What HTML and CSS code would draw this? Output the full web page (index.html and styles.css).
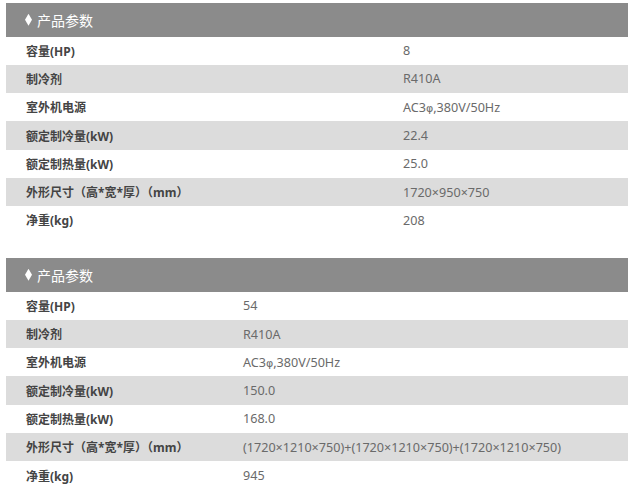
FILE: index.html
```html
<!DOCTYPE html>
<html lang="zh-CN">
<head>
<meta charset="utf-8">
<title>产品参数</title>
<link rel="stylesheet" href="styles.css">
</head>
<body>
<section class="spec spec-wide">
  <div class="spec-head"><span class="diamond"></span>产品参数</div>
  <div class="row"><div class="label">容量(HP)</div><div class="value">8</div></div>
  <div class="row alt"><div class="label">制冷剂</div><div class="value">R410A</div></div>
  <div class="row"><div class="label">室外机电源</div><div class="value">AC3<span class="phi">φ</span>,380V/50Hz</div></div>
  <div class="row alt"><div class="label">额定制冷量(kW)</div><div class="value">22.4</div></div>
  <div class="row"><div class="label">额定制热量(kW)</div><div class="value">25.0</div></div>
  <div class="row alt"><div class="label">外形尺寸（高*宽*厚）（mm）</div><div class="value">1720×950×750</div></div>
  <div class="row"><div class="label">净重(kg)</div><div class="value">208</div></div>
</section>
<section class="spec spec-narrow">
  <div class="spec-head"><span class="diamond"></span>产品参数</div>
  <div class="row"><div class="label">容量(HP)</div><div class="value">54</div></div>
  <div class="row alt"><div class="label">制冷剂</div><div class="value">R410A</div></div>
  <div class="row"><div class="label">室外机电源</div><div class="value">AC3<span class="phi">φ</span>,380V/50Hz</div></div>
  <div class="row alt"><div class="label">额定制冷量(kW)</div><div class="value">150.0</div></div>
  <div class="row"><div class="label">额定制热量(kW)</div><div class="value">168.0</div></div>
  <div class="row alt"><div class="label">外形尺寸（高*宽*厚）（mm）</div><div class="value">(1720×1210×750)+(1720×1210×750)+(1720×1210×750)</div></div>
  <div class="row"><div class="label">净重(kg)</div><div class="value">945</div></div>
</section>
</body>
</html>
```

FILE: styles.css
```css
html, body {
  margin: 0;
  background: #ffffff;
}
body {
  padding: 3px 0 0 6px;
  font-family: "Noto Sans", "Noto Sans CJK SC", sans-serif;
  font-size: 12px;
}
.spec {
  width: 622px;
  display: grid;
}
.spec + .spec {
  margin-top: 23.5px;
}
.spec-wide .row { grid-template-columns: 377px 1fr; }
.spec-narrow .row { grid-template-columns: 217px 1fr; }
.spec-head {
  height: 33.5px;
  background: #8b8b8b;
  color: #ffffff;
  font-size: 14px;
  display: flex;
  align-items: center;
  padding-left: 19px;
}
.diamond {
  width: 7px;
  height: 12px;
  background: #ffffff;
  clip-path: polygon(50% 0, 100% 50%, 50% 100%, 0 50%);
  margin-right: 5px;
}
.row {
  display: grid;
  height: 28.3px;
  align-items: center;
}
.row.alt {
  background: #dcdcdc;
}
.label {
  padding-left: 20px;
  font-weight: bold;
  color: #444444;
}
.value {
  padding-left: 20px;
  color: #6a6a6a;
  font-size: 12.6px;
}
.phi {
  font-family: "DejaVu Sans", sans-serif;
  font-size: 11px;
}
```
